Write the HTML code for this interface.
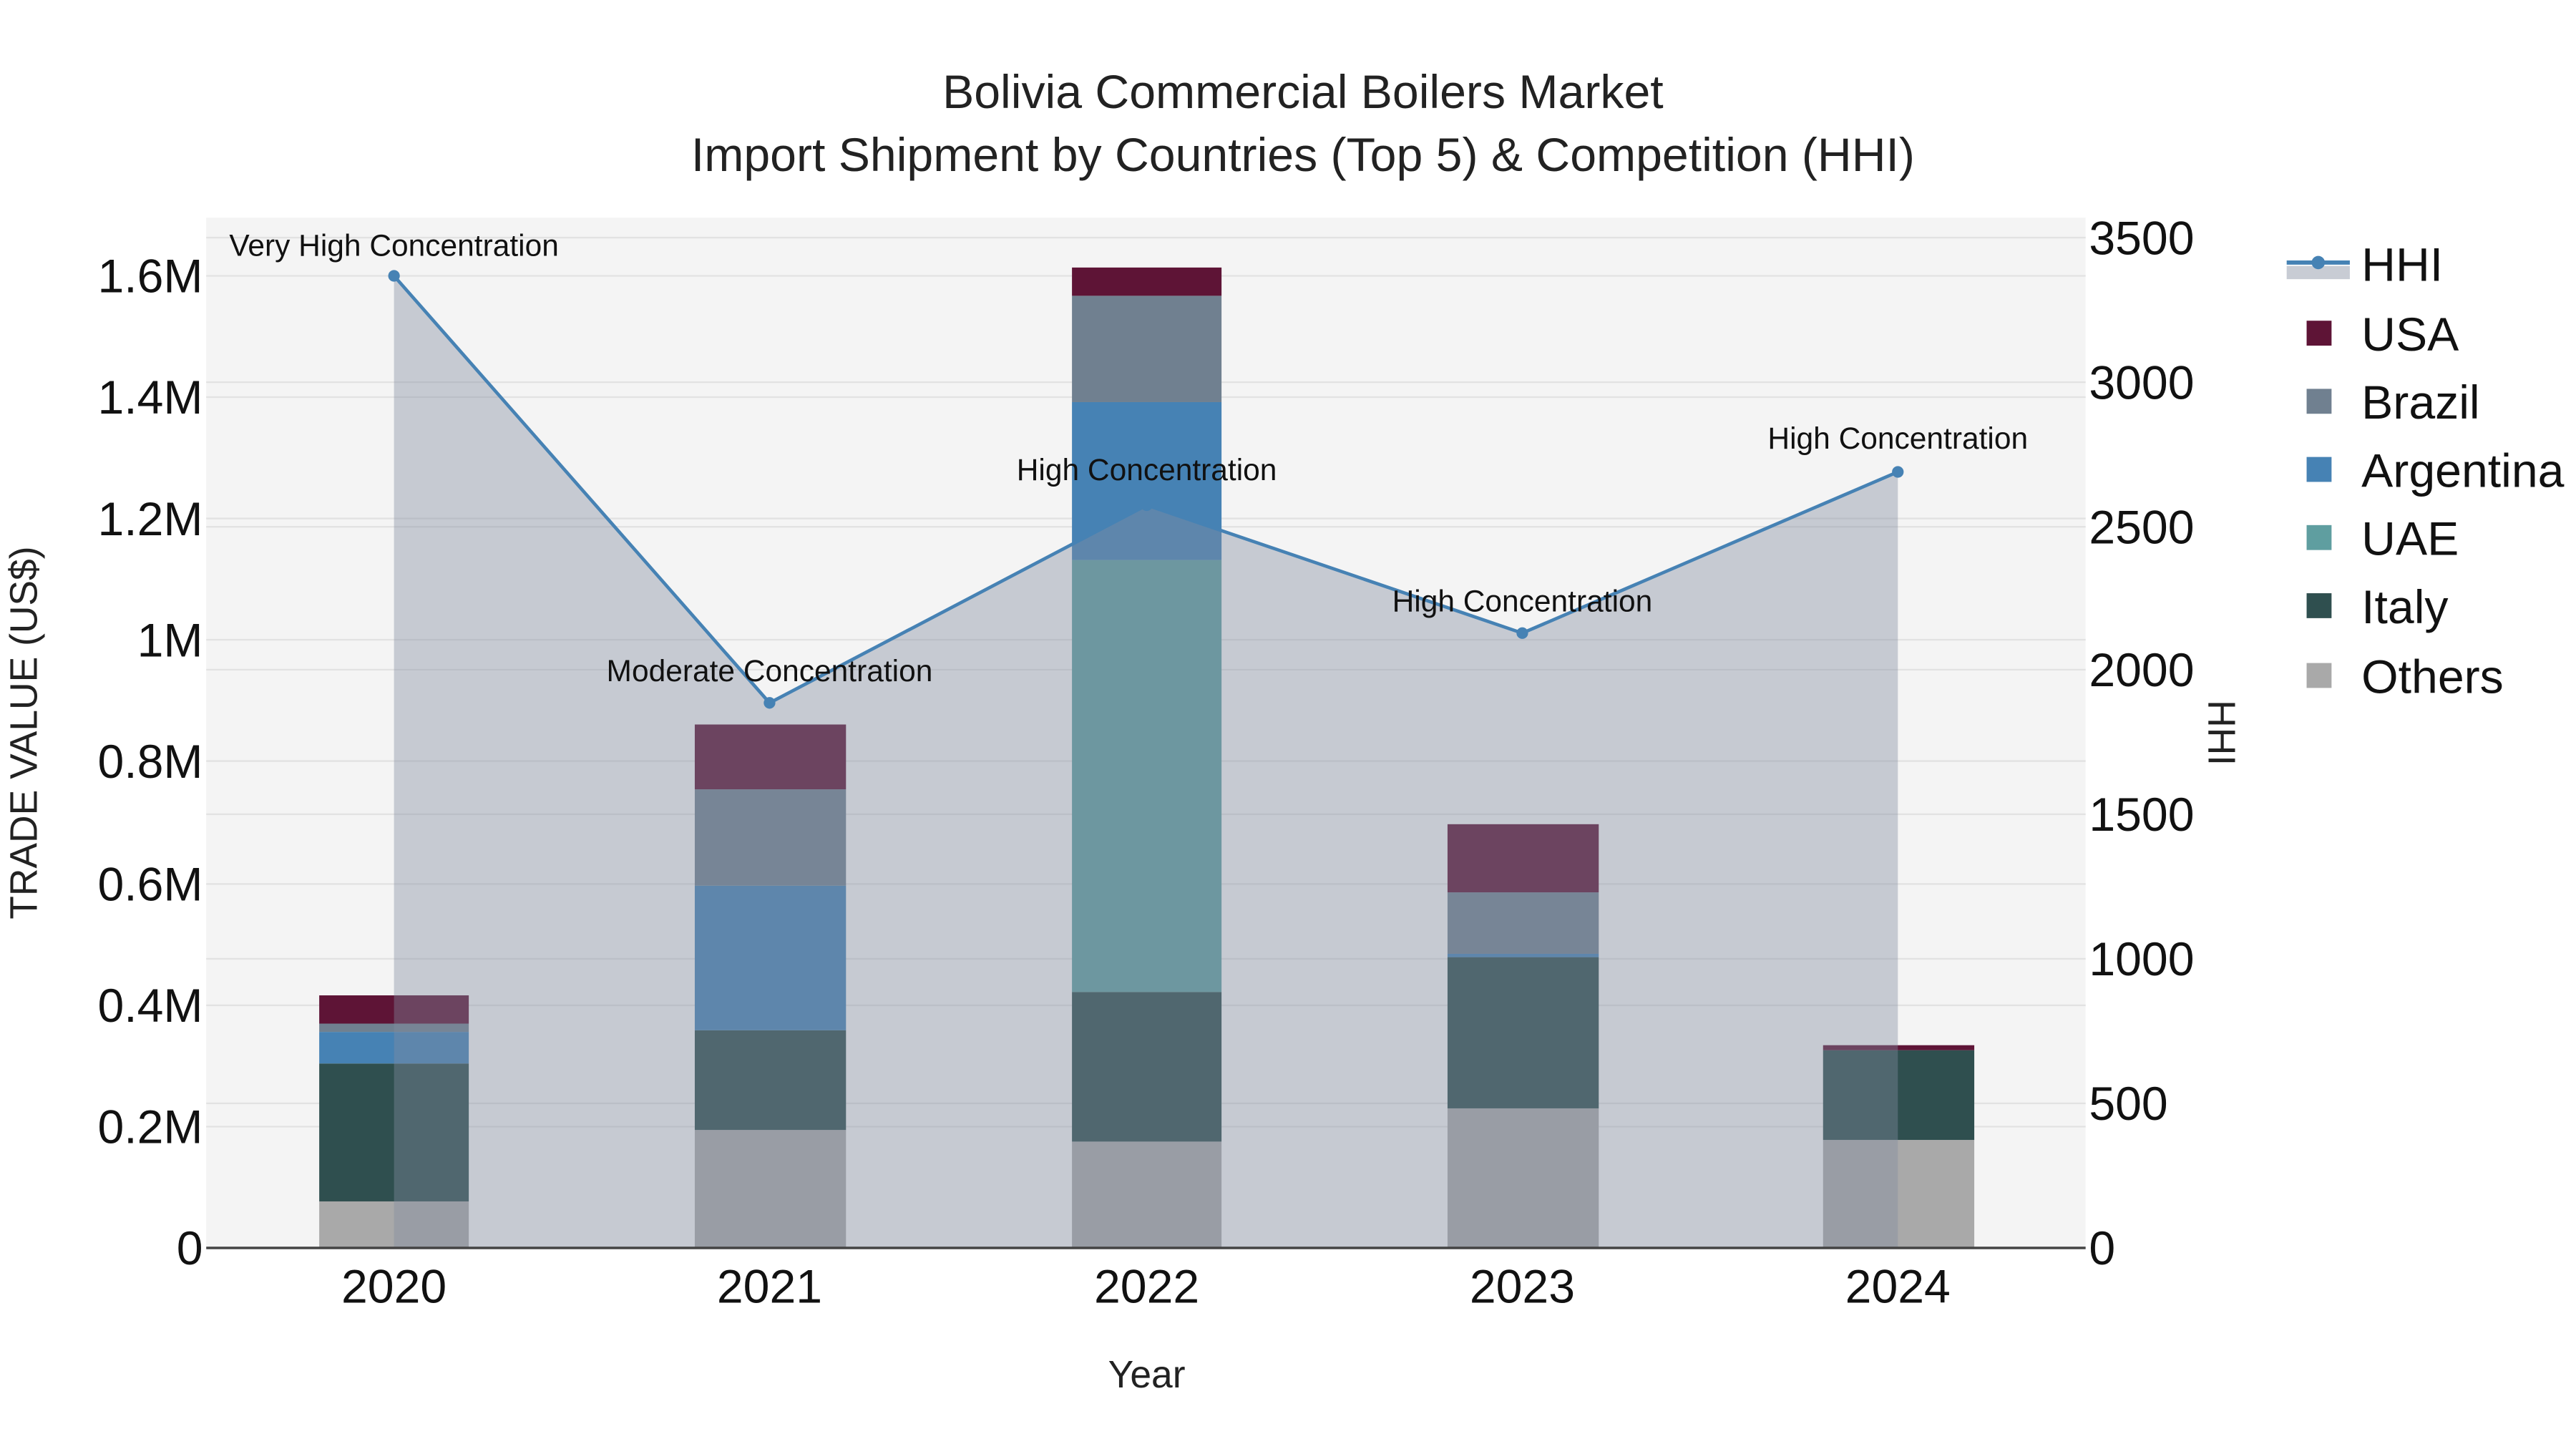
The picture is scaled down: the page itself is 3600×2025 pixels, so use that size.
<!DOCTYPE html>
<html><head><meta charset="utf-8"><style>html,body{margin:0;padding:0;background:#fff}svg{display:block}</style></head>
<body>
<svg width="3600" height="2025" viewBox="0 0 1550 872" xmlns="http://www.w3.org/2000/svg" font-family="Liberation Sans, Arial, sans-serif">
<rect width="1550" height="872" fill="#fff"/>
<rect x="124" y="131" width="1131" height="620" fill="#f4f4f4"/>
<g stroke="#e2e2e2" stroke-width="1">
<line x1="124" x2="1255" y1="678" y2="678"/><line x1="124" x2="1255" y1="605" y2="605"/><line x1="124" x2="1255" y1="532" y2="532"/><line x1="124" x2="1255" y1="458" y2="458"/><line x1="124" x2="1255" y1="385" y2="385"/><line x1="124" x2="1255" y1="312" y2="312"/><line x1="124" x2="1255" y1="239" y2="239"/><line x1="124" x2="1255" y1="166" y2="166"/>
<line x1="124" x2="1255" y1="664" y2="664"/><line x1="124" x2="1255" y1="577" y2="577"/><line x1="124" x2="1255" y1="490" y2="490"/><line x1="124" x2="1255" y1="403" y2="403"/><line x1="124" x2="1255" y1="317" y2="317"/><line x1="124" x2="1255" y1="230" y2="230"/><line x1="124" x2="1255" y1="143" y2="143"/>
</g>
<g>
<rect x="192" y="723" width="90" height="28" fill="#a9a9a9"/>
<rect x="192" y="640" width="90" height="83" fill="#2f4f4f"/>
<rect x="192" y="621" width="90" height="19" fill="#4682b4"/>
<rect x="192" y="616" width="90" height="5" fill="#708090"/>
<rect x="192" y="599" width="90" height="17" fill="#5e1436"/>

<rect x="418" y="680" width="91" height="71" fill="#a9a9a9"/>
<rect x="418" y="620" width="91" height="60" fill="#2f4f4f"/>
<rect x="418" y="533" width="91" height="87" fill="#4682b4"/>
<rect x="418" y="475" width="91" height="58" fill="#708090"/>
<rect x="418" y="436" width="91" height="39" fill="#5e1436"/>

<rect x="645" y="687" width="90" height="64" fill="#a9a9a9"/>
<rect x="645" y="597" width="90" height="90" fill="#2f4f4f"/>
<rect x="645" y="337" width="90" height="260" fill="#5f9ea0"/>
<rect x="645" y="242" width="90" height="95" fill="#4682b4"/>
<rect x="645" y="178" width="90" height="64" fill="#708090"/>
<rect x="645" y="161" width="90" height="17" fill="#5e1436"/>

<rect x="871" y="667" width="91" height="84" fill="#a9a9a9"/>
<rect x="871" y="576" width="91" height="91" fill="#2f4f4f"/>
<rect x="871" y="574" width="91" height="2" fill="#4682b4"/>
<rect x="871" y="537" width="91" height="37" fill="#708090"/>
<rect x="871" y="496" width="91" height="41" fill="#5e1436"/>

<rect x="1097" y="686" width="91" height="65" fill="#a9a9a9"/>
<rect x="1097" y="632" width="91" height="54" fill="#2f4f4f"/>
<rect x="1097" y="629" width="91" height="3" fill="#5e1436"/>
</g>
<polygon points="237,751 237,166 463,423 690,304 916,381 1142,284 1142,751" fill="rgb(130,140,160)" fill-opacity="0.4"/>
<polyline points="237,166 463,423 690,304 916,381 1142,284" fill="none" stroke="#4682b4" stroke-width="2"/>
<g fill="#4682b4"><circle cx="237" cy="166" r="3.5"/><circle cx="463" cy="423" r="3.5"/><circle cx="690" cy="304" r="3.5"/><circle cx="916" cy="381" r="3.5"/><circle cx="1142" cy="284" r="3.5"/></g>
<line x1="124" x2="1255" y1="751" y2="751" stroke="#444" stroke-width="1.5"/>
<g font-size="18.3" fill="#111" text-anchor="middle">
<text x="237" y="154">Very High Concentration</text>
<text x="463" y="410">Moderate Concentration</text>
<text x="690" y="289">High Concentration</text>
<text x="916" y="368">High Concentration</text>
<text x="1142" y="270">High Concentration</text>
</g>
<g font-size="28.5" fill="#222" text-anchor="middle">
<text x="784" y="65">Bolivia Commercial Boilers Market</text>
<text x="784" y="103">Import Shipment by Countries (Top 5) &amp; Competition (HHI)</text>
</g>
<g font-size="28.5" fill="#111" text-anchor="end">
<text x="122" y="761">0</text><text x="122" y="688">0.2M</text><text x="122" y="615">0.4M</text><text x="122" y="542">0.6M</text><text x="122" y="468">0.8M</text><text x="122" y="395">1M</text><text x="122" y="322">1.2M</text><text x="122" y="249">1.4M</text><text x="122" y="176">1.6M</text>
</g>
<g font-size="28.5" fill="#111" text-anchor="start">
<text x="1257" y="761">0</text><text x="1257" y="674">500</text><text x="1257" y="587">1000</text><text x="1257" y="500">1500</text><text x="1257" y="413">2000</text><text x="1257" y="327">2500</text><text x="1257" y="240">3000</text><text x="1257" y="153">3500</text>
</g>
<g font-size="28.5" fill="#111" text-anchor="middle">
<text x="237" y="784">2020</text><text x="463" y="784">2021</text><text x="690" y="784">2022</text><text x="916" y="784">2023</text><text x="1142" y="784">2024</text>
</g>
<text x="690" y="835" font-size="23" fill="#222" text-anchor="middle">Year</text>
<text transform="translate(22,441) rotate(-90)" font-size="23" fill="#222" text-anchor="middle">TRADE VALUE (US$)</text>
<text transform="translate(1329,441) rotate(90)" font-size="23" fill="#222" text-anchor="middle">HHI</text>
<rect x="1376" y="160" width="38" height="8" fill="#c8ccd4"/>
<line x1="1376" x2="1414" y1="158" y2="158" stroke="#4682b4" stroke-width="2.5"/>
<circle cx="1395" cy="158" r="4" fill="#4682b4"/>
<g font-size="28.5" fill="#111">
<text x="1421" y="169">HHI</text>
<text x="1421" y="211">USA</text>
<text x="1421" y="252">Brazil</text>
<text x="1421" y="293">Argentina</text>
<text x="1421" y="334">UAE</text>
<text x="1421" y="375">Italy</text>
<text x="1421" y="417">Others</text>
</g>
<rect x="1388" y="193" width="15" height="15" fill="#5e1436"/>
<rect x="1388" y="234" width="15" height="15" fill="#708090"/>
<rect x="1388" y="275" width="15" height="15" fill="#4682b4"/>
<rect x="1388" y="316" width="15" height="15" fill="#5f9ea0"/>
<rect x="1388" y="357" width="15" height="15" fill="#2f4f4f"/>
<rect x="1388" y="399" width="15" height="15" fill="#a9a9a9"/>
</svg>
</body></html>
